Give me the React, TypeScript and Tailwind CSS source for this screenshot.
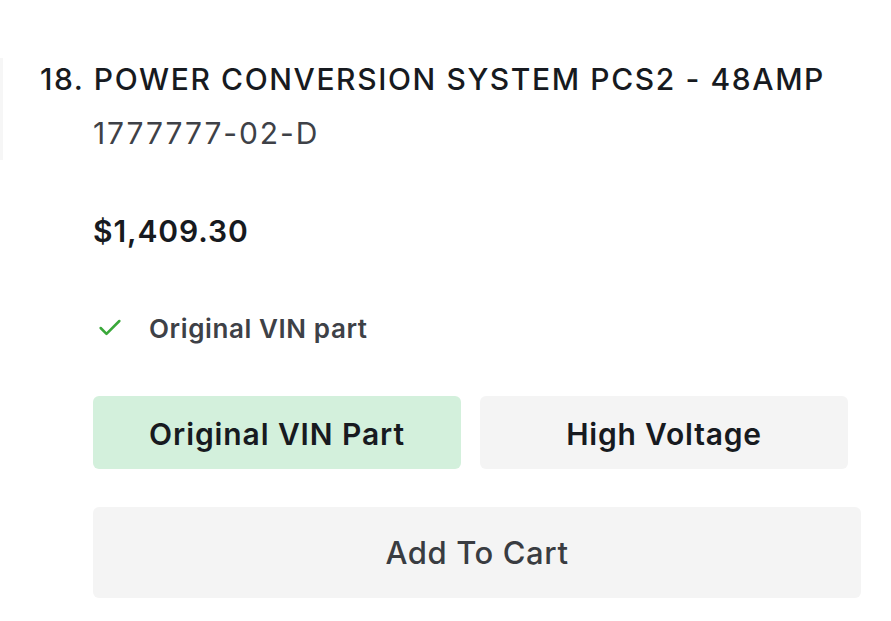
import { Check } from 'lucide-react';

export default function App() {
  return (
    <div className="w-[891px] h-[621px] bg-white flex overflow-hidden font-['Inter','Liberation_Sans',sans-serif]">
      {/* clipped edge of the neighbouring card */}
      <div className="w-[3px] h-[102px] mt-[58px] bg-[#f6f6f6] shrink-0" />

      <div className="ml-[37px] flex flex-col">
        <h2 className="mt-[59px] text-[30px] leading-[40px] font-medium text-[#171a20] tracking-[1.6px] whitespace-nowrap">
          18. POWER CONVERSION SYSTEM PCS2 - 48AMP
        </h2>

        <div className="pl-[53px] flex flex-col">
          <div className="mt-[14px] text-[30px] leading-[40px] text-[#3e4147] tracking-[1.9px]">
            1777777-02-D
          </div>

          <div className="mt-[58px] text-[30px] leading-[40px] font-semibold text-[#171a20] tracking-[0.9px]">
            $1,409.30
          </div>

          <div className="mt-[59px] h-[36px] flex items-center">
            <Check className="w-[28px] h-[28px] ml-[3px] text-[#3aa83a]" strokeWidth={2.2} />
            <span className="ml-[25px] text-[26px] font-semibold text-[#3e4147] tracking-[0.6px]">
              Original VIN part
            </span>
          </div>

          <div className="mt-[50px] flex gap-[19px]">
            <button className="w-[368px] h-[73px] pt-[3px] rounded-[6px] bg-[#d3f0dc] text-[30px] font-semibold text-[#171a20] tracking-[0.9px]">
              Original VIN Part
            </button>
            <button className="w-[368px] h-[73px] pt-[3px] rounded-[6px] bg-[#f4f4f4] text-[30px] font-semibold text-[#171a20] tracking-[0.8px]">
              High Voltage
            </button>
          </div>

          <button className="mt-[38px] w-[768px] h-[91px] pt-[2px] rounded-[6px] bg-[#f4f4f4] text-[31px] font-medium text-[#393c41] tracking-[0.6px]">
            Add To Cart
          </button>
        </div>
      </div>
    </div>
  );
}
